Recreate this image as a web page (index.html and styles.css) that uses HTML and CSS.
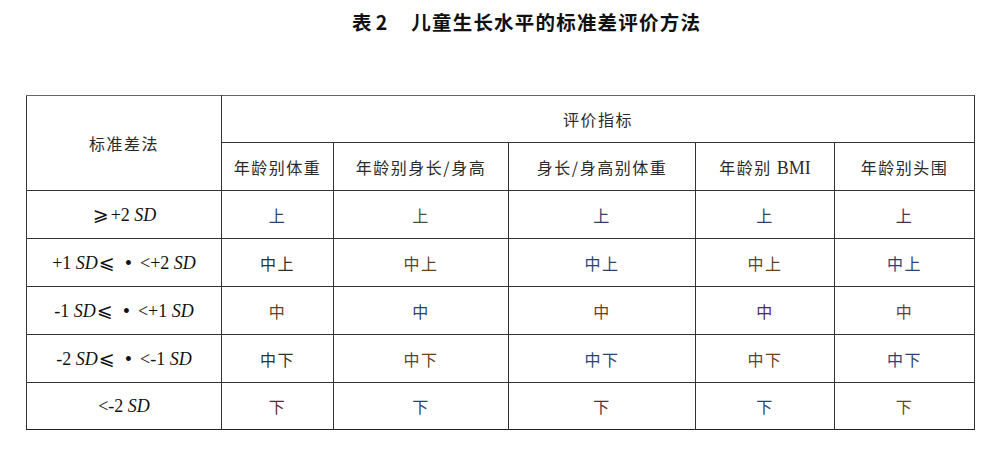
FILE: index.html
```html
<!DOCTYPE html>
<html lang="zh">
<head>
<meta charset="utf-8">
<title>表 2 儿童生长水平的标准差评价方法</title>
<link rel="stylesheet" href="styles.css">
</head>
<body>
<div class="page">
  <h1 class="title"><span class="tno">表 2</span>儿童生长水平的标准差评价方法</h1>
  <table class="grid">
    <colgroup>
      <col class="w0"><col class="w1"><col class="w2"><col class="w3"><col class="w4"><col class="w5">
    </colgroup>
    <thead>
      <tr class="h1">
        <th rowspan="2" class="hd">标准差法</th>
        <th colspan="5" class="hd">评价指标</th>
      </tr>
      <tr class="h2">
        <th class="hd">年龄别体重</th>
        <th class="hd">年龄别身长/身高</th>
        <th class="hd">身长/身高别体重</th>
        <th class="hd">年龄别 <span class="lat">BMI</span></th>
        <th class="hd">年龄别头围</th>
      </tr>
    </thead>
    <tbody>
      <tr>
        <td class="lab"><span class="sym">⩾</span>+2 <i>SD</i></td>
        <td class="c-blue">上</td><td class="c-green">上</td><td class="c-blue">上</td><td class="c-blue">上</td><td class="c-purple">上</td>
      </tr>
      <tr>
        <td class="lab">+1 <i>SD</i><span class="sym">⩽</span> <span class="dot">•</span> &lt;+2 <i>SD</i></td>
        <td class="c-dark">中上</td><td class="c-brown">中上</td><td class="c-blue">中上</td><td class="c-brown">中上</td><td class="c-blue">中上</td>
      </tr>
      <tr>
        <td class="lab">-1 <i>SD</i><span class="sym">⩽</span> <span class="dot">•</span> &lt;+1 <i>SD</i></td>
        <td class="c-brown">中</td><td class="c-blue">中</td><td class="c-brown">中</td><td class="c-purple">中</td><td class="c-brown">中</td>
      </tr>
      <tr>
        <td class="lab">-2 <i>SD</i><span class="sym">⩽</span> <span class="dot">•</span> &lt;-1 <i>SD</i></td>
        <td class="c-dark">中下</td><td class="c-brown">中下</td><td class="c-blue">中下</td><td class="c-brown">中下</td><td class="c-blue">中下</td>
      </tr>
      <tr class="last">
        <td class="lab">&lt;-2 <i>SD</i></td>
        <td class="c-maroon">下</td><td class="c-blue">下</td><td class="c-maroon">下</td><td class="c-blue">下</td><td class="c-brown">下</td>
      </tr>
    </tbody>
  </table>
</div>
</body>
</html>
```

FILE: styles.css
```css
html, body {
  margin: 0;
  padding: 0;
  background: #ffffff;
}

.page {
  width: 1001px;
  height: 457px;
  padding-top: 8px;
  box-sizing: border-box;
}

.title {
  margin: 0;
  padding-left: 52px;
  text-align: center;
  font-family: "Noto Sans CJK SC", sans-serif;
  font-weight: 700;
  font-size: 19.5px;
  line-height: 28px;
  letter-spacing: 1.2px;
  color: #111;
}

.tno {
  margin-right: 24px;
  letter-spacing: 0;
}

.grid {
  margin-top: 59px;
  margin-left: 26px;
  width: 948px;
  border-collapse: collapse;
  table-layout: fixed;
  font-family: "Liberation Serif", "Noto Sans CJK SC", serif;
  font-size: 18px;
  color: #222;
}

.w0 { width: 195px; }
.w1 { width: 112px; }
.w2 { width: 175px; }
.w3 { width: 187px; }
.w4 { width: 139px; }
.w5 { width: 140px; }

.grid th,
.grid td {
  border: 1px solid #333;
  padding: 0;
  text-align: center;
  vertical-align: middle;
  height: 47px;
  box-sizing: border-box;
}

.grid tr.h2 th { height: 48px; }
.grid tbody td { height: 48px; }
.grid tbody tr.last td { height: 47px; border-bottom-color: #222; }

.grid thead tr.h1 th { border-top-color: #666; }
.grid tbody tr:nth-child(4) td,
.grid tbody tr:nth-child(5) td { border-top-color: #555; }

.hd {
  font-family: "Noto Sans CJK SC", sans-serif;
  font-weight: 400;
  font-size: 16px;
  letter-spacing: 1.5px;
  color: #2a2a2a;
}

.hd .lat {
  font-family: "Liberation Serif", serif;
  font-size: 18px;
  letter-spacing: 0;
}

.lab {
  font-family: "Liberation Serif", serif;
  color: #111;
  white-space: nowrap;
}

.lab i {
  font-style: italic;
}

.sym {
  font-family: "DejaVu Sans", "Noto Sans CJK SC", sans-serif;
  font-size: 19px;
  margin: 0 2px 0 1px;
}

.dot {
  font-family: "Liberation Sans", sans-serif;
  font-size: 18px;
  margin: 0 4px;
}

.grid tbody td:not(.lab) {
  font-family: "Noto Sans CJK SC", sans-serif;
  font-size: 16px;
  letter-spacing: 1.5px;
}

.c-blue { color: #2a4470; }
.c-green { color: #3e5a2c; }
.c-brown { color: #6a4018; }
.c-purple { color: #4e2a58; }
.c-maroon { color: #5e2a32; }
.c-dark { color: #2c3424; }
```
